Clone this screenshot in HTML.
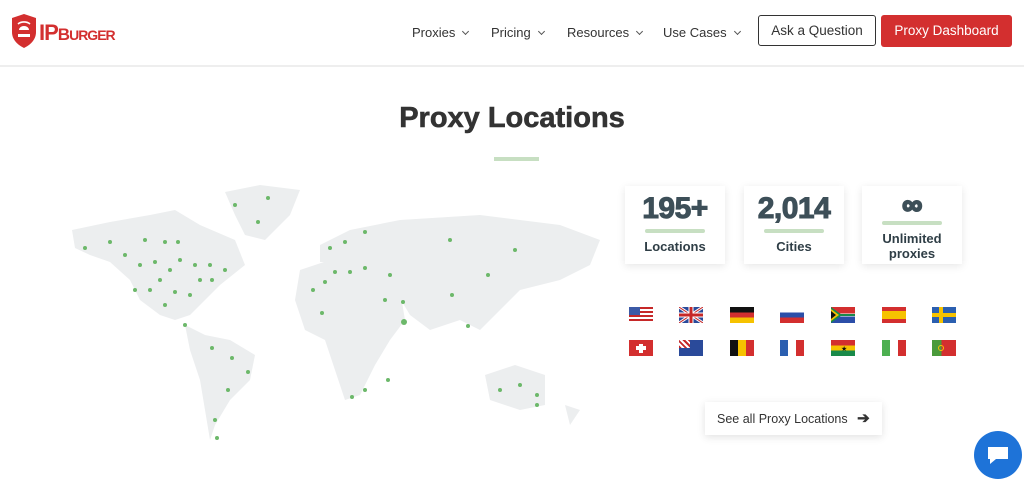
<!DOCTYPE html>
<html><head><style>
*{margin:0;padding:0;box-sizing:border-box}
body{width:1024px;height:486px;background:#fff;font-family:"Liberation Sans",sans-serif;position:relative;overflow:hidden;color:#333}
.hdr{position:absolute;left:0;top:0;width:1024px;height:67px;background:#fff;border-bottom:2px solid #eee}
.nav{position:absolute;top:25px;font-size:13px;color:#333}
.nav:after{content:"";display:inline-block;width:4px;height:4px;border-right:1px solid #555;border-bottom:1px solid #555;transform:rotate(45deg);margin-left:8px;position:relative;top:-3px}
.btn{position:absolute;top:15px;height:32px;border-radius:3px;font-size:13.5px;line-height:30px;text-align:center}
.card{position:absolute;top:186px;width:100px;height:78px;background:#fff;box-shadow:0 2px 8px rgba(0,0,0,.1);text-align:center;color:#2f3e46;font-weight:bold}
.card .n{font-size:30px;color:#3d4f58;margin-top:6px;letter-spacing:-0.5px;-webkit-text-stroke:1px #3d4f58}
.card .b{width:60px;height:4px;background:#c7dfc2;margin:3px auto 6px;border-radius:2px}
.card .l{font-size:13px;line-height:15px}
.f{position:absolute;width:24px;height:16px}
.dot{fill:#6cb86a}
</style></head><body>
<div class="hdr">
<svg style="position:absolute;left:9px;top:14px" width="30" height="34" viewBox="0 0 30 34"><path d="M3 4 L15 0 L27 4 L27 18 C27 26 21 31 15 34 C9 31 3 26 3 18 Z" fill="#d32f2f"/><path d="M9 20h12v3H9z M10 16a5 4 0 0 1 10 0z" fill="#fff"/><path d="M9 10a8 6 0 0 1 12 0" stroke="#fff" stroke-width="1.6" fill="none"/></svg>
<div style="position:absolute;left:39px;top:20px;font-size:22px;font-weight:bold;color:#d32f2f;letter-spacing:-1px">IP<span style="font-size:17px">B</span><span style="font-size:14px">URGER</span></div>
<div class="nav" style="left:412px">Proxies</div>
<div class="nav" style="left:491px">Pricing</div>
<div class="nav" style="left:567px">Resources</div>
<div class="nav" style="left:663px">Use Cases</div>
<div class="btn" style="left:758px;width:118px;border:1px solid #333;color:#333;height:31px">Ask a Question</div>
<div class="btn" style="left:881px;width:131px;background:#d32f2f;color:#fff;line-height:32px">Proxy Dashboard</div>
</div>
<div style="position:absolute;left:0;width:1024px;top:102px;text-align:center;font-size:29px;font-weight:bold;color:#333;-webkit-text-stroke:0.6px #333">Proxy Locations</div>
<div style="position:absolute;left:494px;top:157px;width:45px;height:4px;background:#c7dfc2"></div>
<svg style="position:absolute;left:60px;top:180px" width="550" height="270" viewBox="60 180 550 270">
<g fill="#eceeef">
<path d="M72 230 L110 222 L150 215 L175 210 L200 225 L235 240 L245 265 L220 285 L205 300 L190 315 L175 320 L160 315 L140 300 L130 280 L110 262 L90 255 L75 248Z"/>
<path d="M225 192 L260 185 L300 190 L290 215 L265 240 L245 235 L235 215Z"/>
<path d="M185 325 L205 335 L230 340 L255 355 L250 380 L230 400 L215 425 L210 440 L205 410 L200 380 L190 350Z"/>
<path d="M300 270 L330 260 L360 262 L380 270 L400 290 L405 320 L390 340 L375 365 L360 395 L345 400 L335 370 L325 340 L305 330 L295 300Z"/>
<path d="M320 245 L350 230 L400 220 L480 215 L560 225 L600 240 L590 265 L560 280 L520 290 L500 310 L480 330 L460 320 L430 330 L410 315 L395 290 L370 268 L340 262 L320 262Z"/>
<path d="M485 375 L515 365 L545 375 L545 405 L520 410 L490 400Z"/>
<path d="M565 405 L580 410 L570 425Z"/>
</g>
<g class="dot">
<circle cx="85" cy="248" r="2"/><circle cx="110" cy="242" r="2"/><circle cx="125" cy="255" r="2"/><circle cx="145" cy="240" r="2"/><circle cx="165" cy="242" r="2"/><circle cx="178" cy="242" r="2"/><circle cx="140" cy="265" r="2"/><circle cx="155" cy="262" r="2"/><circle cx="170" cy="270" r="2"/><circle cx="180" cy="260" r="2"/><circle cx="195" cy="265" r="2"/><circle cx="210" cy="265" r="2"/><circle cx="225" cy="270" r="2"/><circle cx="135" cy="290" r="2"/><circle cx="150" cy="290" r="2"/><circle cx="160" cy="280" r="2"/><circle cx="175" cy="292" r="2"/><circle cx="190" cy="295" r="2"/><circle cx="200" cy="280" r="2"/><circle cx="212" cy="280" r="2"/><circle cx="165" cy="305" r="2"/><circle cx="185" cy="325" r="2"/><circle cx="235" cy="205" r="2"/><circle cx="268" cy="198" r="2"/><circle cx="258" cy="222" r="2"/><circle cx="212" cy="348" r="2"/><circle cx="232" cy="358" r="2"/><circle cx="248" cy="372" r="2"/><circle cx="228" cy="390" r="2"/><circle cx="215" cy="420" r="2"/><circle cx="217" cy="438" r="2"/><circle cx="330" cy="248" r="2"/><circle cx="345" cy="242" r="2"/><circle cx="365" cy="232" r="2"/><circle cx="335" cy="272" r="2"/><circle cx="350" cy="272" r="2"/><circle cx="365" cy="268" r="2"/><circle cx="325" cy="282" r="2"/><circle cx="313" cy="290" r="2"/><circle cx="390" cy="275" r="2"/><circle cx="322" cy="313" r="2"/><circle cx="385" cy="300" r="2"/><circle cx="403" cy="302" r="2"/><circle cx="404" cy="322" r="3"/><circle cx="450" cy="240" r="2"/><circle cx="515" cy="250" r="2"/><circle cx="488" cy="275" r="2"/><circle cx="452" cy="295" r="2"/><circle cx="468" cy="326" r="2"/><circle cx="388" cy="380" r="2"/><circle cx="365" cy="390" r="2"/><circle cx="352" cy="397" r="2"/><circle cx="500" cy="390" r="2"/><circle cx="520" cy="385" r="2"/><circle cx="537" cy="395" r="2"/><circle cx="537" cy="405" r="2"/>
</g>
</svg>
<div class="card" style="left:625px"><div class="n">195+</div><div class="b"></div><div class="l">Locations</div></div>
<div class="card" style="left:744px"><div class="n">2,014</div><div class="b"></div><div class="l">Cities</div></div>
<div class="card" style="left:862px;height:78px"><div class="n" style="font-size:28px;line-height:26px;-webkit-text-stroke:2px #3d4f58">∞</div><div class="b"></div><div class="l">Unlimited<br>proxies</div></div>
<div class="f" style="left:629px;top:307px;background:repeating-linear-gradient(#c62828 0 2px,#fff 2px 4px)"><div style="width:11px;height:8px;background:#3c5aa6"></div></div>
<div class="f" style="left:679px;top:307px;background:#2a4a9a"><svg width="24" height="16"><path d="M0 0L24 16M24 0L0 16" stroke="#fff" stroke-width="3"/><path d="M0 0L24 16M24 0L0 16" stroke="#c62828" stroke-width="1"/><path d="M12 0V16M0 8H24" stroke="#fff" stroke-width="5"/><path d="M12 0V16M0 8H24" stroke="#c62828" stroke-width="3"/></svg></div>
<div class="f" style="left:730px;top:307px;background:linear-gradient(#111 0 33%,#d32f2f 33% 66%,#f6c200 66%)"></div>
<div class="f" style="left:780px;top:307px;background:linear-gradient(#fff 0 33%,#2b4ea8 33% 66%,#d32f2f 66%)"></div>
<div class="f" style="left:831px;top:307px;background:linear-gradient(#d32f2f 0 40%,#fff 40% 45%,#198a4a 45% 55%,#fff 55% 60%,#2b4ea8 60%)"><svg width="24" height="16" style="position:absolute"><path d="M0 0L11 8L0 16Z" fill="#198a4a"/><path d="M0 2L8 8L0 14Z" fill="#f6c200"/><path d="M0 4L5 8L0 12Z" fill="#111"/></svg></div>
<div class="f" style="left:882px;top:307px;background:linear-gradient(#d32f2f 0 25%,#f6c200 25% 75%,#d32f2f 75%)"></div>
<div class="f" style="left:932px;top:307px;background:#2b5fb0"><div style="position:absolute;left:7px;top:0;width:4px;height:16px;background:#f6c200"></div><div style="position:absolute;left:0;top:6px;width:24px;height:4px;background:#f6c200"></div></div>
<div class="f" style="left:629px;top:340px;background:#d32f2f"><div style="position:absolute;left:10px;top:4px;width:4px;height:9px;background:#fff"></div><div style="position:absolute;left:7px;top:6px;width:10px;height:4px;background:#fff"></div></div>
<div class="f" style="left:679px;top:340px;background:#2a4a9a"><div style="width:11px;height:8px;background:repeating-linear-gradient(45deg,#c62828 0 2px,#fff 2px 4px)"></div></div>
<div class="f" style="left:730px;top:340px;background:linear-gradient(90deg,#111 0 33%,#f6c200 33% 66%,#d32f2f 66%)"></div>
<div class="f" style="left:780px;top:340px;background:linear-gradient(90deg,#2b5fb0 0 33%,#fff 33% 66%,#d32f2f 66%)"></div>
<div class="f" style="left:831px;top:340px;background:linear-gradient(#d32f2f 0 33%,#f6c200 33% 66%,#198a4a 66%)"><div style="position:absolute;left:10px;top:5px;font-size:7px;color:#111">★</div></div>
<div class="f" style="left:882px;top:340px;background:linear-gradient(90deg,#4caf50 0 33%,#fff 33% 66%,#d32f2f 66%)"></div>
<div class="f" style="left:932px;top:340px;background:linear-gradient(90deg,#4a9a3a 0 40%,#d32f2f 40%)"><div style="position:absolute;left:6px;top:5px;width:6px;height:6px;border-radius:50%;border:1px solid #f6c200"></div></div>
<div style="position:absolute;left:705px;top:402px;width:177px;height:33px;background:#fff;box-shadow:0 2px 8px rgba(0,0,0,.12);font-size:12.5px;color:#333;line-height:33px;padding-left:12px">See all Proxy Locations <span style="font-weight:bold;font-size:15px;margin-left:6px">➔</span></div>
<div style="position:absolute;left:974px;top:431px;width:48px;height:48px;border-radius:50%;background:#1e73d8"><svg width="48" height="48"><path d="M14 16h20v12H22l-6 5v-5h-2z" fill="#fff"/></svg></div>
</body></html>
